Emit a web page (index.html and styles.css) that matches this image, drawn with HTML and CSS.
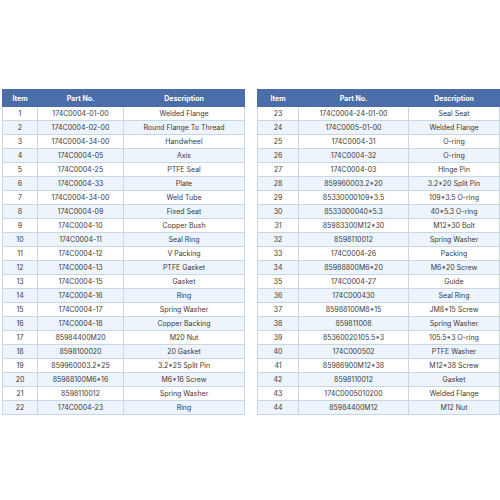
FILE: index.html
```html
<!DOCTYPE html>
<html>
<head>
<meta charset="utf-8">
<link rel="stylesheet" href="styles.css">
</head>
<body>
<div class="page">
  <table class="parts parts-left">
    <colgroup><col class="c-item"><col class="c-part"><col class="c-desc"></colgroup>
    <thead><tr><th>Item</th><th>Part No.</th><th>Description</th></tr></thead>
    <tbody>
      <tr><td>1</td><td>174C0004-01-00</td><td>Welded Flange</td></tr>
      <tr><td>2</td><td>174C0004-02-00</td><td>Round Flange To Thread</td></tr>
      <tr><td>3</td><td>174C0004-34-00</td><td>Handwheel</td></tr>
      <tr><td>4</td><td>174C0004-05</td><td>Axis</td></tr>
      <tr><td>5</td><td>174C0004-25</td><td>PTFE Seal</td></tr>
      <tr><td>6</td><td>174C0004-33</td><td>Plate</td></tr>
      <tr><td>7</td><td>174C0004-34-00</td><td>Weld Tube</td></tr>
      <tr><td>8</td><td>174C0004-09</td><td>Fixed Seat</td></tr>
      <tr><td>9</td><td>174C0004-10</td><td>Copper Bush</td></tr>
      <tr><td>10</td><td>174C0004-11</td><td>Seal Ring</td></tr>
      <tr><td>11</td><td>174C0004-12</td><td>V Packing</td></tr>
      <tr><td>12</td><td>174C0004-13</td><td>PTFE Gasket</td></tr>
      <tr><td>13</td><td>174C0004-15</td><td>Gasket</td></tr>
      <tr><td>14</td><td>174C0004-16</td><td>Ring</td></tr>
      <tr><td>15</td><td>174C0004-17</td><td>Spring Washer</td></tr>
      <tr><td>16</td><td>174C0004-18</td><td>Copper Backing</td></tr>
      <tr><td>17</td><td>85984400M20</td><td>M20 Nut</td></tr>
      <tr><td>18</td><td>8598100020</td><td>20 Gasket</td></tr>
      <tr><td>19</td><td>859960003.2*25</td><td>3.2*25 Split Pin</td></tr>
      <tr><td>20</td><td>85988100M6*16</td><td>M6*16 Screw</td></tr>
      <tr><td>21</td><td>8598110012</td><td>Spring Washer</td></tr>
      <tr><td>22</td><td>174C0004-23</td><td>Ring</td></tr>
    </tbody>
  </table>
  <table class="parts parts-right">
    <colgroup><col class="c-item"><col class="c-part"><col class="c-desc"></colgroup>
    <thead><tr><th>Item</th><th>Part No.</th><th>Description</th></tr></thead>
    <tbody>
      <tr><td>23</td><td>174C0004-24-01-00</td><td>Seal Seat</td></tr>
      <tr><td>24</td><td>174C0005-01-00</td><td>Welded Flange</td></tr>
      <tr><td>25</td><td>174C0004-31</td><td>O-ring</td></tr>
      <tr><td>26</td><td>174C0004-32</td><td>O-ring</td></tr>
      <tr><td>27</td><td>174C0004-03</td><td>Hinge Pin</td></tr>
      <tr><td>28</td><td>859960003.2*20</td><td>3.2*20 Split Pin</td></tr>
      <tr><td>29</td><td>85330000109*3.5</td><td>109*3.5 O-ring</td></tr>
      <tr><td>30</td><td>8533000040*5.3</td><td>40*5.3 O-ring</td></tr>
      <tr><td>31</td><td>85983300M12*30</td><td>M12*30 Bolt</td></tr>
      <tr><td>32</td><td>8598110012</td><td>Spring Washer</td></tr>
      <tr><td>33</td><td>174C0004-26</td><td>Packing</td></tr>
      <tr><td>34</td><td>85988800M6*20</td><td>M6*20 Screw</td></tr>
      <tr><td>35</td><td>174C0004-27</td><td>Guide</td></tr>
      <tr><td>36</td><td>174C000430</td><td>Seal Ring</td></tr>
      <tr><td>37</td><td>85988100M8*15</td><td>JM8*15 Screw</td></tr>
      <tr><td>38</td><td>859811008</td><td>Spring Washer</td></tr>
      <tr><td>39</td><td>85360020105.5*3</td><td>105.5*3 O-ring</td></tr>
      <tr><td>40</td><td>174C000502</td><td>PTFE Washer</td></tr>
      <tr><td>41</td><td>85986900M12*38</td><td>M12*38 Screw</td></tr>
      <tr><td>42</td><td>8598110012</td><td>Gasket</td></tr>
      <tr><td>43</td><td>174C0005010200</td><td>Welded Flange</td></tr>
      <tr><td>44</td><td>85984400M12</td><td>M12 Nut</td></tr>
    </tbody>
  </table>
</div>
</body>
</html>
```
FILE: styles.css
```css
html, body {
  margin: 0;
  padding: 0;
  background: #ffffff;
}
body {
  font-family: "Inter", "Open Sans", sans-serif;
  color: #3a3a3a;
}
.page {
  display: flex;
  gap: 12px;
  padding: 89px 2px 0 2px;
}
.parts {
  width: 242px;
  border-collapse: collapse;
  table-layout: fixed;
  font-size: 7px;
}
.parts th {
  background: #4b6ea8;
  color: #ffffff;
  font-weight: 700;
  height: 16px;
  padding: 0;
  text-align: center;
  border: 1px solid #4b6ea8;
}
.parts td {
  height: 13px;
  padding: 0;
  text-align: center;
  border: 1px solid #c9d6ea;
  white-space: nowrap;
}
.parts tbody tr:nth-child(even) td {
  background: #eef4fc;
}
.parts-left .c-item { width: 35px; }
.parts-left .c-part { width: 86px; }
.parts-left .c-desc { width: 121px; }
.parts-right .c-item { width: 41px; }
.parts-right .c-part { width: 110px; }
.parts-right .c-desc { width: 91px; }
```
